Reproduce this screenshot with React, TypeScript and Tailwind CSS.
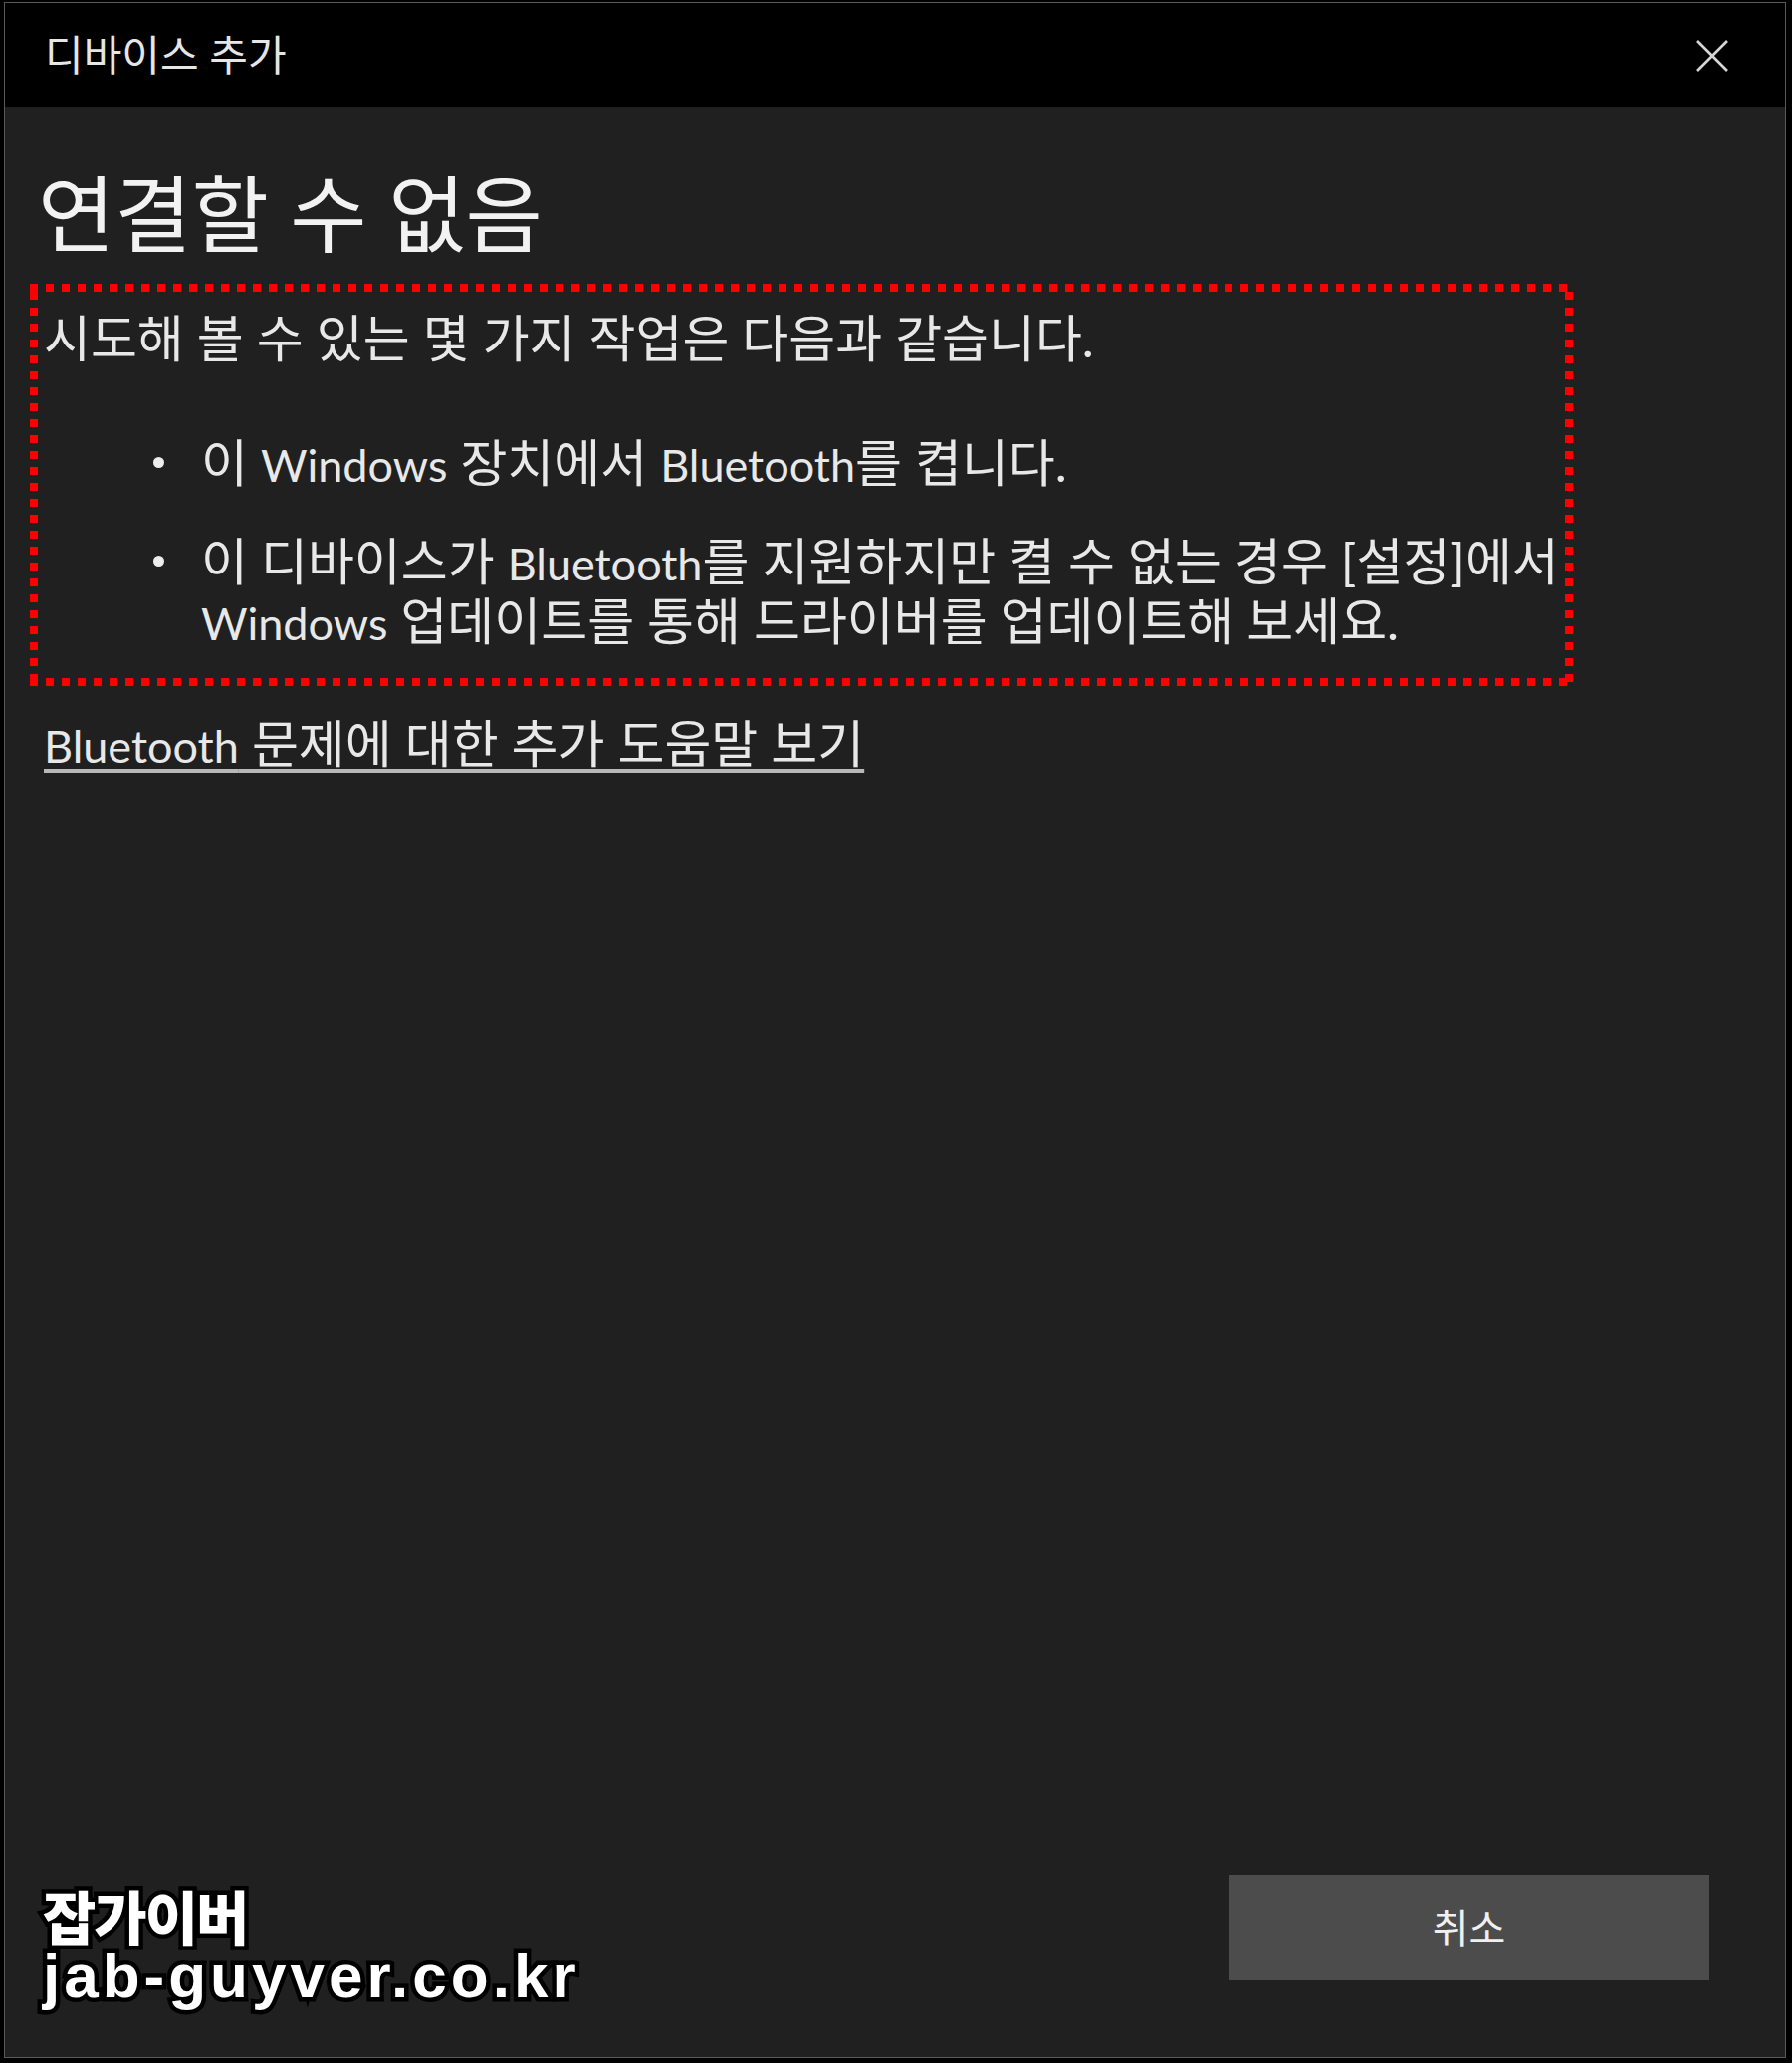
const ko = "font-['Lato','Noto_Sans_CJK_KR',sans-serif]";

// Latin words are narrower in the reference (Segoe UI), so shrink them a bit
const En = ({ children }: { children: string }) => (
  <span className="text-[45px] leading-[1]">{children}</span>
);

export default function App() {
  return (
    <div className="w-[1800px] h-[2072px] bg-black pt-[2px] pl-[4px]">
      <div className={`w-[1790px] h-[2065px] border border-[#5a5a5a] bg-[#202020] flex flex-col ${ko}`}>
        {/* title bar */}
        <div className="h-[104px] bg-black flex items-center justify-between pl-[40px] pr-[56px] shrink-0">
          <span className="text-[42px] leading-none text-[#e6e6e6]">디바이스 추가</span>
          <svg width="34" height="34" viewBox="0 0 34 34" className="mt-[2px]">
            <path d="M2 2 L32 32 M32 2 L2 32" stroke="#d6d6d6" strokeWidth="2.6" />
          </svg>
        </div>

        <div className="pl-[25px] pr-[40px] flex flex-col">
          <h1 className="mt-[58px] pl-[8px] text-[84px] leading-[100px] font-normal text-[#f2f2f2]">
            연결할 수 없음
          </h1>

          {/* red dotted highlight */}
          <div className="mt-[20px] w-[1550px] pt-[25px] pb-[35px] pl-[14px] [background-image:linear-gradient(90deg,#ff0000_50%,transparent_50%),linear-gradient(90deg,#ff0000_50%,transparent_50%),linear-gradient(0deg,#ff0000_50%,transparent_50%),linear-gradient(0deg,#ff0000_50%,transparent_50%)] [background-size:16px_8px,16px_8px,8px_16px,8px_16px] [background-position:0_0,0_100%,0_0,100%_0] [background-repeat:repeat-x,repeat-x,repeat-y,repeat-y]">
            <p className="text-[51px] leading-[60px] text-[#e8e8e8]">
              시도해 볼 수 있는 몇 가지 작업은 다음과 같습니다.
            </p>
            <ul className="mt-[65px] text-[51px] leading-[60px] text-[#e8e8e8]">
              <li className="flex items-start">
                <span className="ml-[110px] mt-[24px] w-[11px] h-[11px] rounded-full bg-[#ededed] shrink-0" />
                <span className="ml-[37px]">
                  이 <En>Windows</En> 장치에서 <En>Bluetooth</En>를 켭니다.
                </span>
              </li>
              <li className="flex items-start mt-[39px]">
                <span className="ml-[110px] mt-[24px] w-[11px] h-[11px] rounded-full bg-[#ededed] shrink-0" />
                <span className="ml-[37px] whitespace-nowrap">
                  이 디바이스가 <En>Bluetooth</En>를 지원하지만 켤 수 없는 경우 [설정]에서
                  <br />
                  <En>Windows</En> 업데이트를 통해 드라이버를 업데이트해 보세요.
                </span>
              </li>
            </ul>
          </div>

          <a className="mt-[28px] ml-[14px] self-start text-[51px] leading-[60px] text-[#e8e8e8] underline decoration-[#b8b8b8] decoration-[4px] underline-offset-[6px]">
            <En>Bluetooth</En> 문제에 대한 추가 도움말 보기
          </a>
        </div>

        <div className="flex-1" />

        <div className="flex items-end justify-between pl-[38px] pr-[76px] pb-[50px]">
          <div className="text-white [-webkit-text-stroke:9px_black] [paint-order:stroke_fill]">
            <div className="text-[58px] leading-[62px] tracking-[-2px] font-black font-['Noto_Sans_CJK_KR',sans-serif]">잡가이버</div>
            <div className="text-[62px] leading-[62px] tracking-[4px] font-bold font-['Liberation_Sans',sans-serif]">jab-guyver.co.kr</div>
          </div>
          <button className="w-[483px] h-[106px] bg-[#4c4c4c] text-[40px] text-[#f0f0f0] mb-[27px]">취소</button>
        </div>
      </div>
    </div>
  );
}
